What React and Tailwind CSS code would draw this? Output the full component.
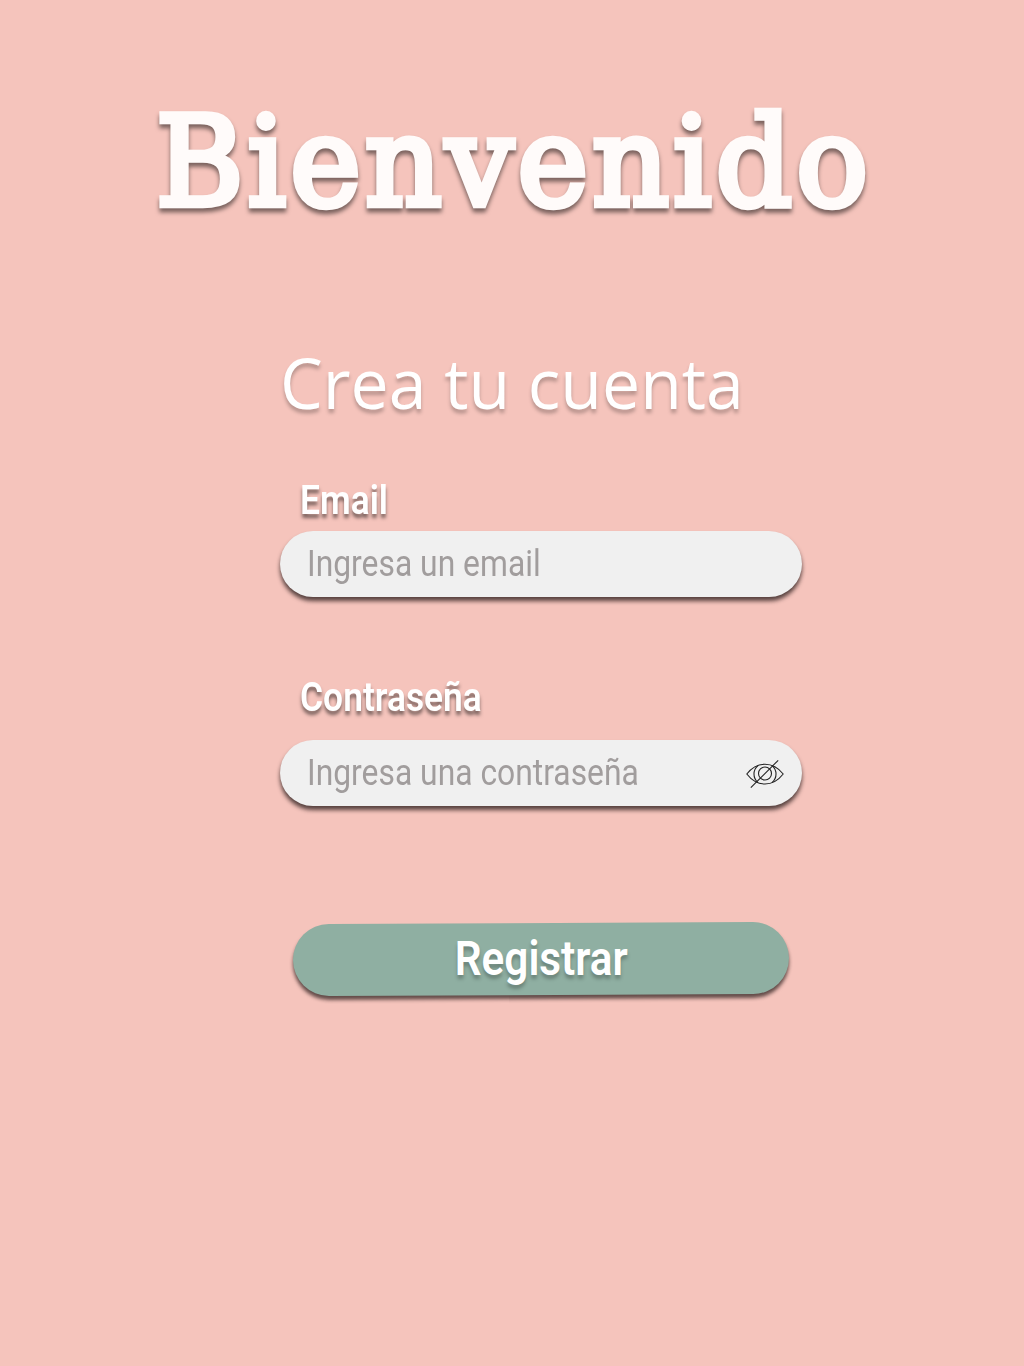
const LABEL_SHADOW = "[text-shadow:0_4px_4px_rgba(0,0,0,0.5)]";
const FIELD =
  "flex h-[66px] w-[522px] items-center rounded-full bg-[#f0f0f0] pl-[27px] pr-[18.5px] text-[36px] text-[#a19d9d] shadow-[0_4px_4px_rgba(20,10,10,0.7)]";

function Condensed({ children }) {
  return (
    <span className="inline-block origin-left scale-x-[0.884] whitespace-nowrap">
      {children}
    </span>
  );
}

function HiddenEye() {
  return (
    <svg
      className="mt-px h-[30px] w-[38px] shrink-0"
      viewBox="0 0 38 30"
      fill="none"
      stroke="#222"
      strokeWidth="1.1"
    >
      <path d="M.8 15C6 8.3 12 5.2 19 5.2S32 8.3 37.2 15C32 21.700 26 25 19 25S6 21.700.8 15Z" />
      <path d="M12 6.600a11 11 0 0 0 0 17M26 6.600a11 11 0 0 1 0 17" />
      <circle cx="19" cy="14.500" r="6.500" />
      <path d="M4.800 28.700L32.200 1.300" />
    </svg>
  );
}

export default function App() {
  return (
    <main className="flex h-[1366px] w-[1024px] flex-col overflow-hidden bg-[#f5c4bc] font-[Roboto,sans-serif] text-white">
      <h1 className="mt-[83px] ml-[156px] h-[160px] font-['DejaVu_Serif',serif] text-[123px] leading-[160px] font-normal whitespace-nowrap text-[#fffbfa]">
        <span className="inline-block origin-left scale-x-[0.97] tracking-[4.3px] [-webkit-text-stroke:6.5px_#fffbfa] [filter:drop-shadow(0_4px_2px_rgba(0,0,0,0.5))]">
          Bienvenido
        </span>
      </h1>
      <h2 className="mt-[89px] ml-[280px] h-[100px] font-['Open_Sans',sans-serif] text-[70px] leading-[100px] font-normal whitespace-nowrap [text-shadow:0_4px_4px_rgba(0,0,0,0.25)]">
        <span className="inline-block origin-left scale-x-[0.971]">
          Crea tu cuenta
        </span>
      </h2>

      <section className="mt-[39px] ml-[280px] flex w-[522px] flex-col">
        <div
          className={`h-[60px] pl-[19.5px] text-[40px] leading-[60px] font-semibold ${LABEL_SHADOW}`}
        >
          <Condensed>Email</Condensed>
        </div>
        <div className={FIELD}>
          <Condensed>Ingresa un email</Condensed>
        </div>

        <div
          className={`mt-[71px] h-[60px] pl-[19.5px] text-[40px] leading-[60px] font-semibold ${LABEL_SHADOW}`}
        >
          <Condensed>Contraseña</Condensed>
        </div>
        <div className={`mt-3 justify-between ${FIELD}`}>
          <Condensed>Ingresa una contraseña</Condensed>
          <HiddenEye />
        </div>

        <button className="mt-[117px] ml-[13px] flex h-[72px] w-[496px] rotate-[-0.25deg] items-center justify-center rounded-full bg-[#8fafa2] text-[48px] font-semibold shadow-[0_4px_4px_rgba(20,10,10,0.65)]">
          <span className="inline-block rotate-[0.25deg] scale-x-[0.88] [text-shadow:0_4px_4px_rgba(0,0,0,0.25)]">
            Registrar
          </span>
        </button>
      </section>
    </main>
  );
}
